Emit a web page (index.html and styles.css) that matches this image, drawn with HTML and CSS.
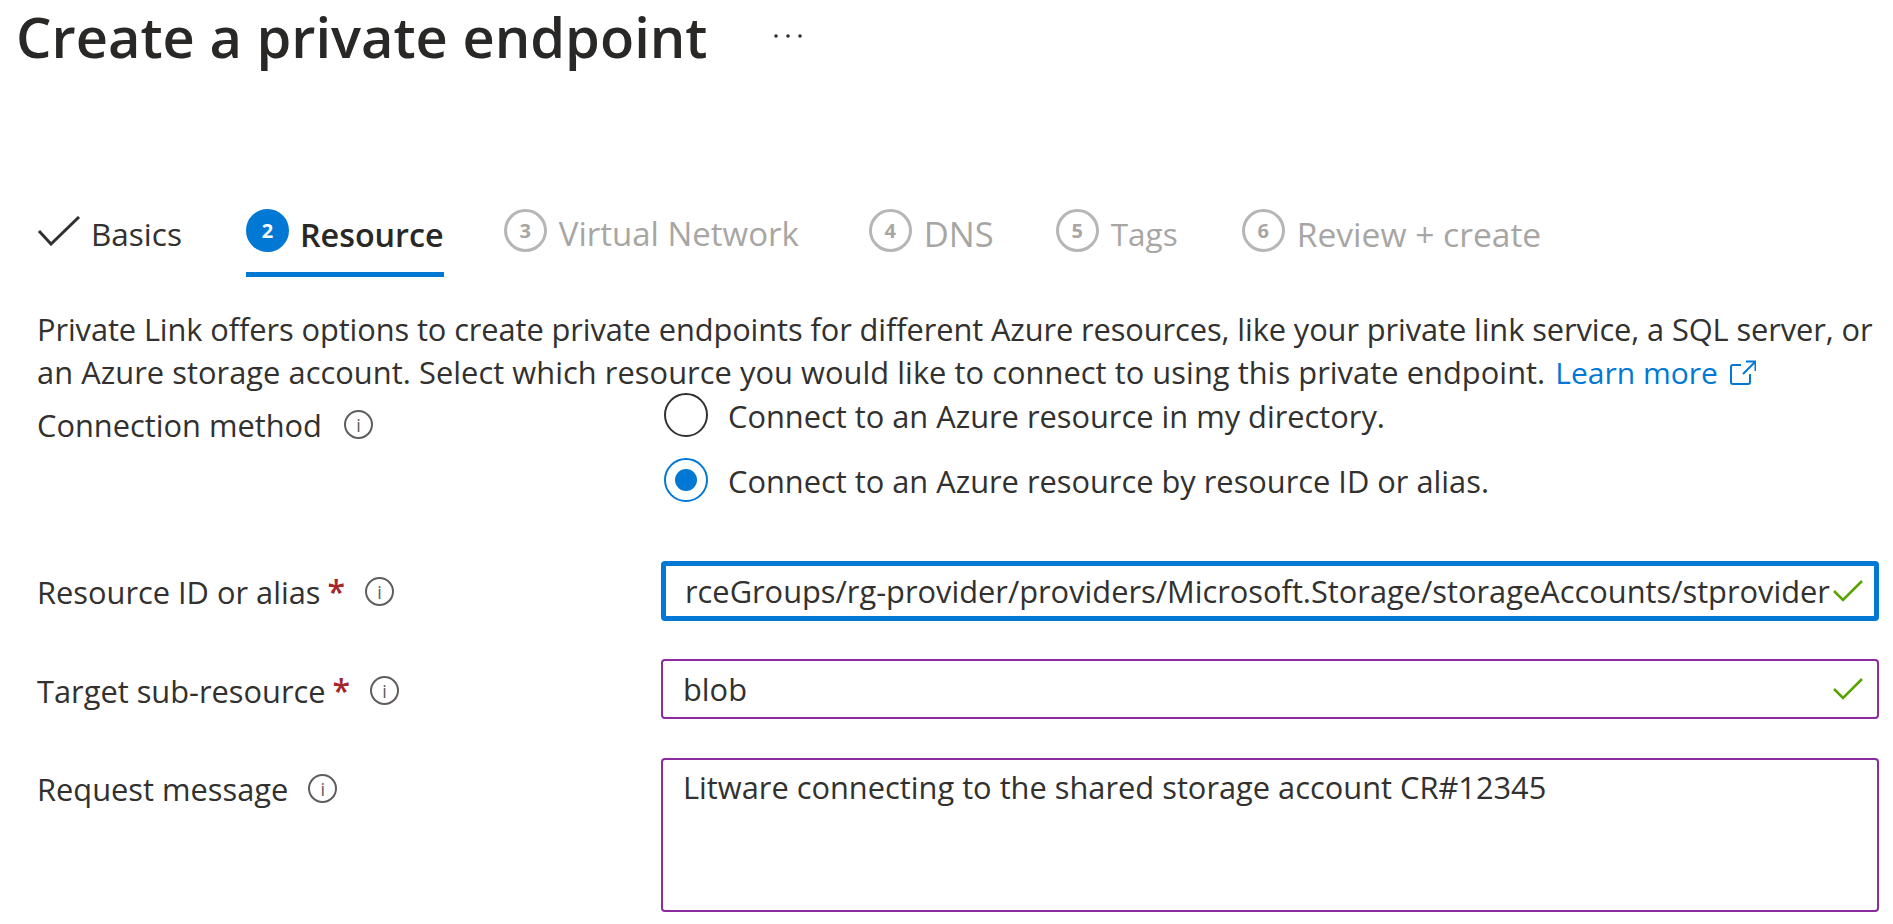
FILE: index.html
```html
<!DOCTYPE html>
<html lang="en">
<head>
<meta charset="utf-8">
<title>Create a private endpoint</title>
<link rel="stylesheet" href="styles.css">
</head>
<body>
<header class="title-row">
  <h1 class="title">Create a private endpoint</h1>
  <svg class="more" viewBox="0 0 30 6" width="30" height="6"><circle cx="3" cy="3" r="1.800" fill="#323130"/><circle cx="15" cy="3" r="1.800" fill="#323130"/><circle cx="27" cy="3" r="1.800" fill="#323130"/></svg>
</header>
<nav class="tabs">
  <div class="tab tab-done">
    <svg class="tick" viewBox="0 0 44 30" width="44" height="30"><path d="M2 15 L14 28 L42 1" fill="none" stroke="#323130" stroke-width="3"/></svg>
    <span>Basics</span>
  </div>
  <div class="tab tab-active"><span class="step step-active">2</span><span>Resource</span></div>
  <div class="tab tab-off tab-vnet"><span class="step">3</span><span>Virtual Network</span></div>
  <div class="tab tab-off tab-dns"><span class="step">4</span><span>DNS</span></div>
  <div class="tab tab-off tab-tags"><span class="step">5</span><span>Tags</span></div>
  <div class="tab tab-off tab-review"><span class="step">6</span><span>Review + create</span></div>
</nav>
<main class="content">
  <div class="intro">
    <p class="line line-a">Private Link offers options to create private endpoints for different Azure resources, like your private link service, a SQL server, or</p>
    <div class="line-b">
      <p class="line">an Azure storage account. Select which resource you would like to connect to using this private endpoint.</p>
      <a class="learn" href="#">Learn more <svg class="ext" viewBox="0 0 26 26" width="26" height="26"><path d="M11 5H3a2 2 0 0 0-2 2v15a2 2 0 0 0 2 2h15a2 2 0 0 0 2-2v-8M13 14 25 2M16 1.500h9.500V11" fill="none" stroke="#0078d4" stroke-width="2"/></svg></a>
    </div>
  </div>

  <div class="row row-radio">
    <div class="label"><span>Connection method</span><span class="info">i</span></div>
    <div class="radios">
      <div class="radio-item"><span class="radio"></span><span class="radio-text">Connect to an Azure resource in my directory.</span></div>
      <div class="radio-item"><span class="radio radio-on"></span><span class="radio-text">Connect to an Azure resource by resource ID or alias.</span></div>
    </div>
  </div>

  <div class="row row-id">
    <div class="label"><span>Resource ID or alias</span><span class="req">*</span><span class="info">i</span></div>
    <div class="field field-focus">
      <span class="value value-clip">rceGroups/rg-provider/providers/Microsoft.Storage/storageAccounts/stprovider</span>
      <svg class="ok" viewBox="0 0 30 22" width="30" height="22"><path d="M1 11 L10 20 L29 1" fill="none" stroke="#57a300" stroke-width="2.500"/></svg>
    </div>
  </div>

  <div class="row row-sub">
    <div class="label"><span>Target sub-resource</span><span class="req">*</span><span class="info">i</span></div>
    <div class="field">
      <span class="value">blob</span>
      <svg class="ok" viewBox="0 0 30 22" width="30" height="22"><path d="M1 11 L10 20 L29 1" fill="none" stroke="#57a300" stroke-width="2.500"/></svg>
    </div>
  </div>

  <div class="row row-msg">
    <div class="label"><span>Request message</span><span class="info">i</span></div>
    <div class="field field-area"><span class="value">Litware connecting to the shared storage account CR#12345</span></div>
  </div>
</main>
</body>
</html>
```
FILE: styles.css
```css
* { box-sizing: border-box; }
html, body { margin: 0; height: 924px; overflow: hidden; background: #fff; }
body { font-family: "Open Sans", "Noto Sans", sans-serif; color: #323130; font-size: 30.8px; }

.title-row { display: flex; align-items: flex-start; height: 204px; padding-left: 16px; }
.title { margin: 0; font-size: 56px; line-height: 72px; font-weight: 600; color: #292827; }
.more { margin-left: 65px; margin-top: 33px; }

.tabs { display: flex; height: 73px; padding-left: 37px; font-size: 33px; }
.tab { display: flex; align-items: flex-start; gap: 12px; line-height: 60px; height: 73px; }
.tab-done { margin-right: 64px; gap: 10px; font-size: 31.5px; }
.tick { margin-top: 12px; }
.tab-active { border-bottom: 5px solid #0078d4; margin-right: 60px; color: #292827; font-weight: 600; font-size: 32.3px; gap: 11px; }
.tab-off { color: #a8a6a4; margin-right: 62px; }
.tab-vnet { margin-right: 70px; }
.tab-dns > span:last-child { font-size: 34.5px; }
.tab-tags { margin-right: 64px; }
.tab-tags > span:last-child { font-size: 31.5px; }
.tab-review > span:last-child { font-size: 33.6px; }
.step { width: 43px; height: 43px; margin-top: 5px; border-radius: 50%; border: 3px solid #b8b6b4; display: flex; align-items: center; justify-content: center; font-size: 20px; line-height: 1; font-weight: 700; }
.step-active { background: #0078d4; border-color: #0078d4; color: #fff; }

.content { padding: 31px 0 0 37px; }
.intro { width: 1856px; }
.line { margin: 0; line-height: 43px; white-space: nowrap; letter-spacing: 0.055px; }
.line-a { letter-spacing: -0.095px; }
.line-b { display: flex; align-items: center; gap: 10px; }
.learn { color: #0078d4; text-decoration: none; font-size: 30px; line-height: 43px; white-space: nowrap; }
.ext { vertical-align: -2px; margin-left: 4px; }

.row { display: grid; grid-template-columns: 624px 1218px; }
.label { display: flex; align-items: center; height: 41px; margin-top: 10px; }
.req { color: #a4262c; margin-left: 7px; font-weight: 600; font-size: 32px; line-height: 1; }
.info { width: 29px; height: 29px; margin-left: 20px; border: 2px solid #605e5c; border-radius: 50%; display: flex; align-items: center; justify-content: center; font-size: 18px; line-height: 1; color: #605e5c; }
.req + .info { margin-left: 20px; }

.row-radio { margin-top: -1px; height: 168px; }
.row-radio .label { margin-top: 11px; }
.row-radio .info { margin-left: 22px; }
.row-sub .label { margin-top: 11px; }
.radios { display: flex; flex-direction: column; gap: 21px; margin-left: 3px; }
.radio-item { display: flex; align-items: center; gap: 20px; height: 44px; }
.radio-text { padding-top: 2px; }
.radio { width: 44px; height: 44px; border-radius: 50%; border: 2px solid #323130; display: block; flex: none; }
.radio-on { border-color: #0078d4; display: flex; align-items: center; justify-content: center; }
.radio-on::after { content: ""; width: 22px; height: 22px; border-radius: 50%; background: #0078d4; }

.field { display: flex; align-items: center; justify-content: space-between; height: 60px; border: 2px solid #8a2ba0; border-radius: 4px; padding: 0 14px 0 20px; }
.field-focus { border: 5px solid #0078d4; padding: 0 11px 0 19px; }
.value { white-space: nowrap; }
.value-clip { overflow: hidden; }
.ok { flex: none; }
.field-area { height: 154px; align-items: flex-start; padding-top: 6px; }

.row-id { margin-bottom: 38px; }
.row-sub { margin-bottom: 39px; }
```
